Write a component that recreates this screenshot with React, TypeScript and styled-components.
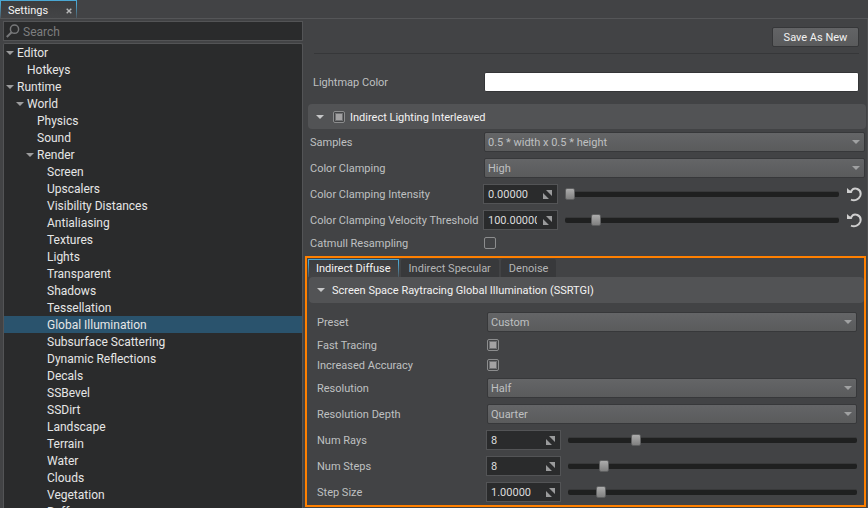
import React, { useState } from "react";
import styled, { createGlobalStyle, css } from "styled-components";

const GlobalStyle = createGlobalStyle`
  *, *::before, *::after { box-sizing: border-box; }
  body {
    margin: 0;
    background: #424345;
    color: #bfc0c1;
    font: 11px/16px Roboto, "Noto Sans", sans-serif;
  }
  input, select, button { font: inherit; color: inherit; margin: 0; }
`;

const treeFont = css`
  font-family: Roboto, "Noto Sans", sans-serif;
  font-size: 12px;
`;

/* ---------- window frame ---------- */

const Window = styled.div`
  display: flex;
  flex-direction: column;
  height: 100vh;
  overflow: hidden;
`;

const TitleBar = styled.header`
  display: flex;
  flex: none;
  height: 19px;
  border-bottom: 1px solid #555658;
`;

const activeTab = css`
  color: #f4f4f4;
  background: linear-gradient(#3c3d3f, #434446);
  border: 1px solid;
  border-bottom: 0;
  border-image: linear-gradient(#4aa7d3 20%, #4d5054) 1;
`;

const Caption = styled.span`
  display: block;
  padding-top: 2px;
  white-space: nowrap;
`;

const WindowTab = styled.div`
  display: flex;
  align-items: center;
  justify-content: space-between;
  width: 77px;
  padding: 0 4px 0 7px;
  ${activeTab}
`;

const CloseButton = styled.button`
  display: flex;
  padding: 2px 0 0;
  border: 0;
  background: none;
  color: #b8b9ba;
`;

const Body = styled.div`
  display: flex;
  flex: 1;
  min-height: 0;
`;

/* ---------- navigation ---------- */

const Sidebar = styled.aside`
  display: flex;
  flex-direction: column;
  flex: none;
  width: 303px;
  padding: 2px 0 0 3px;
  gap: 2px;
`;

const SearchBox = styled.label`
  display: flex;
  align-items: center;
  flex: none;
  gap: 3px;
  height: 20px;
  padding: 0 2px;
  background: #2a2b2c;
  border: 1px solid #535456;
  ${treeFont}
`;

const SearchInput = styled.input`
  flex: 1;
  min-width: 0;
  padding: 2px 0 0;
  border: 0;
  outline: 0;
  background: none;
  &::placeholder { color: #7d7e7f; opacity: 1; }
`;

const Tree = styled.ul`
  flex: 1;
  min-height: 0;
  margin: 0;
  padding: 0;
  overflow: hidden;
  list-style: none;
  background: #2a2b2c;
  border: 1px solid #535456;
  border-bottom: 0;
  border-radius: 2px 2px 0 0;
  color: #e6e6e6;
  ${treeFont}
`;

const TreeRow = styled.li<{ $depth: number; $selected: boolean }>`
  display: flex;
  align-items: center;
  height: 17px;
  line-height: 17px;
  padding-left: ${(p) => p.$depth * 10 + 2}px;
  background: ${(p) => (p.$selected ? "#2a536d" : "transparent")};
  white-space: nowrap;
`;

const TreeArrow = styled.span`
  display: flex;
  width: 11px;
  color: #9b9c9d;
`;

/* ---------- parameters ---------- */

const Panel = styled.main`
  flex: 1;
  min-width: 0;
  padding: 0 1px 0 5px;
  border-right: 1px solid #4e4f51;
`;

const Toolbar = styled.div`
  display: flex;
  justify-content: flex-end;
  height: 35px;
  margin: 0 7px 0 6px;
  padding-top: 8px;
  border-bottom: 1px solid #363739;
`;

const PushButton = styled.button`
  width: 87px;
  height: 20px;
  padding: 2px 0 0;
  border: 1px solid #363739;
  border-radius: 2px;
  background: linear-gradient(#636466, #5a5b5c);
  color: #f2f2f2;
  line-height: 16px;
`;

const Group = styled.section<{ $labelWidth: number; $inset: number; $end: number; $top?: number }>`
  --label: ${(p) => p.$labelWidth}px;
  padding: ${(p) => p.$top ?? 0}px ${(p) => p.$end}px 0 ${(p) => p.$inset}px;
`;

const Row = styled.div<{ $compact?: boolean }>`
  display: grid;
  grid-template-columns: var(--label) minmax(0, 1fr);
  align-items: center;
  height: ${(p) => (p.$compact ? 20 : 26)}px;
`;

const LightmapRow = styled(Row)`
  height: 20px;
  margin: 18px 6px 12px 0;
  & > label { padding-left: 3px; }
`;

const Label = styled.label`
  padding-top: 2px;
  white-space: nowrap;
`;

const ColorSwatch = styled.button`
  height: 20px;
  padding: 0;
  border: 1px solid #343537;
  border-radius: 2px;
  background: #fff;
`;

const GroupHeader = styled.div<{ $nested?: boolean }>`
  display: flex;
  align-items: center;
  gap: ${(p) => (p.$nested ? 7 : 5)}px;
  height: ${(p) => (p.$nested ? 26 : 25)}px;
  margin-left: ${(p) => (p.$nested ? 1 : 0)}px;
  padding-left: 8px;
  background: #525355;
  border-radius: 4px;
  color: #f2f2f2;
  & > svg { color: #c6c7c8; }
  & > input { margin-left: 4px; }
`;

const SelectBox = styled.div`
  display: grid;
  align-items: center;
  & > * { grid-area: 1 / 1; }
  & > svg { justify-self: end; margin-right: 5px; color: #a0a1a2; pointer-events: none; }
`;

const Select = styled.select`
  appearance: none;
  width: 100%;
  height: 20px;
  padding: 2px 16px 0 3px;
  border: 1px solid #37383a;
  border-radius: 2px;
  outline: 0;
  background: linear-gradient(#646567, #5a5b5c);
`;

const Check = styled.input`
  appearance: none;
  display: grid;
  place-items: center;
  width: 12px;
  height: 12px;
  border: 1px solid #8c8d8e;
  border-radius: 2px;
  background: #424345;
  &:checked::before {
    content: "";
    width: 8px;
    height: 8px;
    background: #a3a2a3;
    border: 1px solid #707173;
  }
`;

const NumberRow = styled.div`
  display: flex;
  align-items: center;
`;

const SpinBox = styled.div`
  display: flex;
  align-items: center;
  flex: none;
  gap: 6px;
  width: 75px;
  height: 20px;
  margin-left: -1px;
  padding: 0 5px 0 4px;
  background: #2a2b2c;
  border: 1px solid #535456;
  color: #dcdcdc;
`;

const SpinInput = styled.input`
  flex: 1;
  min-width: 0;
  padding: 2px 0 0;
  border: 0;
  outline: 0;
  background: none;
`;

const Range = styled.input`
  appearance: none;
  flex: 1;
  min-width: 0;
  height: 14px;
  margin-left: 7px;
  outline: 0;
  background: none;
  &::-webkit-slider-runnable-track {
    height: 6px;
    border-radius: 2px;
    background: #1f2020;
    border: 1px solid #38393a;
    border-width: 1px 0 0;
  }
  &::-webkit-slider-thumb {
    appearance: none;
    width: 10px;
    height: 12px;
    margin-top: -4px;
    border: 1px solid #5e5f60;
    border-radius: 2px;
    background: linear-gradient(#acacac, #808080);
  }
`;

const ResetButton = styled.button`
  display: flex;
  flex: none;
  padding: 0 3px 0 8px;
  border: 0;
  background: none;
  color: #cfcfcf;
`;

const Highlight = styled.div`
  margin: 3px 0 0 -3px;
  padding: 1px 0 0 1px;
  border: 2px solid #ff8000;
`;

const TabList = styled.div`
  display: flex;
  gap: 2px;
  height: 18px;
`;

const Tab = styled.button<{ $active: boolean }>`
  padding: 2px 8px 0;
  border: 0;
  border-radius: 2px 2px 0 0;
  background: #38393b;
  color: #b4b5b6;
  line-height: 16px;
  ${(p) => p.$active && activeTab}
  ${(p) => p.$active && "padding: 1px 7px 0;"}
`;

/* ---------- glyphs ---------- */

const DownArrow = () => (
  <svg width="8" height="4" viewBox="0 0 8 4" aria-hidden="true">
    <path d="M0 0H8L4 4Z" fill="currentColor" />
  </svg>
);

const CloseIcon = () => (
  <svg width="6" height="6" viewBox="0 0 6 6" aria-hidden="true">
    <path d="M.7 .7L5.3 5.3M5.3 .7L.7 5.3" stroke="currentColor" strokeWidth="1.4" />
  </svg>
);

const SearchIcon = () => (
  <svg width="14" height="14" viewBox="0 0 14 14" fill="none" stroke="#77787a" aria-hidden="true">
    <circle cx="8.5" cy="5.2" r="4.1" strokeWidth="1.5" />
    <path d="M5.6 8.2L.8 13" strokeWidth="2" />
  </svg>
);

const DragIcon = () => (
  <svg width="9" height="9" viewBox="0 0 9 9" fill="#9a9b9c" aria-hidden="true">
    <path d="M3 0H9V6ZM0 3L6 9H0Z" />
  </svg>
);

const ResetIcon = () => (
  <svg width="15" height="15" viewBox="0 0 15 15" fill="none" stroke="currentColor" aria-hidden="true">
    <path d="M2 4.4H4.2C5.4 2 8 1 10.4 2C13 3.2 14.2 6 13.2 9C12 12.2 8 14.2 4 12.6" strokeWidth="2" />
    <path d="M0 1V6H5.4Z" fill="currentColor" stroke="none" />
  </svg>
);

/* ---------- data ---------- */

type Node = { name: string; depth: number; open?: boolean };

const nodes: Node[] = [
  { name: "Editor", depth: 0, open: true },
  { name: "Hotkeys", depth: 1 },
  { name: "Runtime", depth: 0, open: true },
  { name: "World", depth: 1, open: true },
  { name: "Physics", depth: 2 },
  { name: "Sound", depth: 2 },
  { name: "Render", depth: 2, open: true },
  ...[
    "Screen", "Upscalers", "Visibility Distances", "Antialiasing", "Textures", "Lights",
    "Transparent", "Shadows", "Tessellation", "Global Illumination", "Subsurface Scattering",
    "Dynamic Reflections", "Decals", "SSBevel", "SSDirt", "Landscape", "Terrain", "Water",
    "Clouds", "Vegetation", "Buffers",
  ].map((name) => ({ name, depth: 3 })),
];

/* ---------- fields ---------- */

function SelectField({ id, label, options }: { id: string; label: string; options: string[] }) {
  return (
    <Row>
      <Label htmlFor={id}>{label}</Label>
      <SelectBox>
        <Select id={id}>
          {options.map((o) => <option key={o}>{o}</option>)}
        </Select>
        <DownArrow />
      </SelectBox>
    </Row>
  );
}

function CheckField({ id, label, checked }: { id: string; label: string; checked?: boolean }) {
  return (
    <Row $compact>
      <Label htmlFor={id}>{label}</Label>
      <Check id={id} type="checkbox" defaultChecked={checked} />
    </Row>
  );
}

type NumberProps = {
  id: string; label: string; value: number; min: number; max: number; digits?: number; reset?: boolean;
};

function NumberField({ id, label, value, min, max, digits = 0, reset }: NumberProps) {
  const [current, setCurrent] = useState(value);
  return (
    <Row>
      <Label htmlFor={id}>{label}</Label>
      <NumberRow>
        <SpinBox>
          <SpinInput
            id={id}
            value={current.toFixed(digits)}
            onChange={(e) => setCurrent(Number(e.target.value) || 0)}
          />
          <DragIcon />
        </SpinBox>
        <Range
          type="range"
          aria-label={label}
          min={min}
          max={max}
          step={digits ? 0.00001 : 1}
          value={current}
          onChange={(e) => setCurrent(Number(e.target.value))}
        />
        {reset && (
          <ResetButton aria-label={`Reset ${label}`} onClick={() => setCurrent(value)}>
            <ResetIcon />
          </ResetButton>
        )}
      </NumberRow>
    </Row>
  );
}

export default function App() {
  const [selected, setSelected] = useState("Global Illumination");
  const [tab, setTab] = useState("Indirect Diffuse");
  return (
    <>
      <GlobalStyle />
      <Window>
        <TitleBar>
          <WindowTab>
            <Caption>Settings</Caption>
            <CloseButton aria-label="Close"><CloseIcon /></CloseButton>
          </WindowTab>
        </TitleBar>
        <Body>
          <Sidebar>
            <SearchBox>
              <SearchIcon />
              <SearchInput placeholder="Search" aria-label="Search" />
            </SearchBox>
            <Tree>
              {nodes.map((n) => (
                <TreeRow
                  key={n.name}
                  $depth={n.depth}
                  $selected={n.name === selected}
                  onClick={() => setSelected(n.name)}
                >
                  <TreeArrow>{n.open && <DownArrow />}</TreeArrow>
                  <Caption>{n.name}</Caption>
                </TreeRow>
              ))}
            </Tree>
          </Sidebar>
          <Panel>
            <Toolbar><PushButton>Save As New</PushButton></Toolbar>
            <Group $labelWidth={174} $inset={2} $end={1}>
              <LightmapRow>
                <Label htmlFor="lightmap">Lightmap Color</Label>
                <ColorSwatch id="lightmap" />
              </LightmapRow>
            </Group>
            <GroupHeader>
              <DownArrow />
              <Check id="interleaved" type="checkbox" defaultChecked />
              <Label htmlFor="interleaved">Indirect Lighting Interleaved</Label>
            </GroupHeader>
            <Group $labelWidth={174} $inset={2} $end={1}>
              <SelectField id="samples" label="Samples" options={["0.5 * width x 0.5 * height"]} />
              <SelectField id="clamping" label="Color Clamping" options={["High"]} />
              <NumberField id="intensity" label="Color Clamping Intensity" value={0} min={0} max={1} digits={5} reset />
              <NumberField id="velocity" label="Color Clamping Velocity Threshold" value={100} min={0} max={1000} digits={5} reset />
              <CheckField id="catmull" label="Catmull Resampling" />
            </Group>
            <Highlight>
              <TabList role="tablist">
                {["Indirect Diffuse", "Indirect Specular", "Denoise"].map((t) => (
                  <Tab key={t} role="tab" aria-selected={t === tab} $active={t === tab} onClick={() => setTab(t)}>
                    {t}
                  </Tab>
                ))}
              </TabList>
              <GroupHeader $nested>
                <DownArrow />
                <Caption>Screen Space Raytracing Global Illumination (SSRTGI)</Caption>
              </GroupHeader>
              <Group $labelWidth={170} $inset={9} $end={7} $top={6}>
                <SelectField id="preset" label="Preset" options={["Custom"]} />
                <CheckField id="fast" label="Fast Tracing" checked />
                <CheckField id="accuracy" label="Increased Accuracy" checked />
                <SelectField id="resolution" label="Resolution" options={["Half"]} />
                <SelectField id="depth" label="Resolution Depth" options={["Quarter"]} />
                <NumberField id="rays" label="Num Rays" value={8} min={1} max={32} />
                <NumberField id="steps" label="Num Steps" value={8} min={1} max={64} />
                <NumberField id="size" label="Step Size" value={1} min={0} max={10} digits={5} />
              </Group>
            </Highlight>
          </Panel>
        </Body>
      </Window>
    </>
  );
}
